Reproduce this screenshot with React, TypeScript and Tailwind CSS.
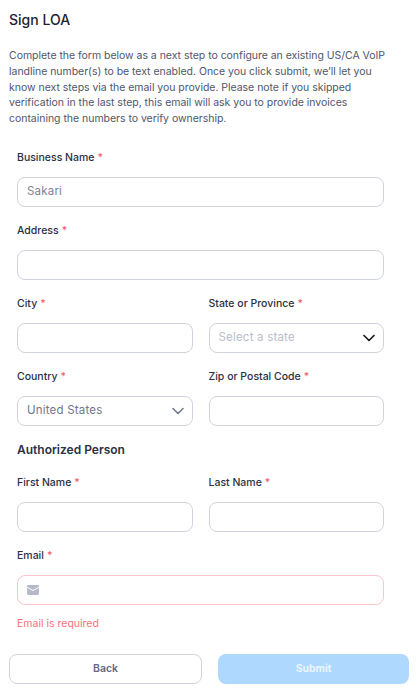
import { ChevronDown } from "lucide-react";
import type { ReactNode } from "react";

function Label({ text, required = true }: { text: string; required?: boolean }) {
  return (
    <label className="block h-[14px] text-[10.5px] leading-[16px] font-medium text-[#2a2f45]">
      {text}
      {required ? <span className="ml-[3px] text-[#f0616d]">*</span> : null}
    </label>
  );
}

function Box({ children, error }: { children?: ReactNode; error?: boolean }) {
  return (
    <div
      className={`mt-[13px] flex h-[30px] items-center rounded-[8px] border bg-white px-[9px] text-[11.5px] tracking-[0.2px] ${
        error ? "border-[#fcc5c9]" : "border-[#cfd3e0]"
      }`}
    >
      {children}
    </div>
  );
}

function Field({ label, children }: { label: string; children?: ReactNode }) {
  return (
    <div className="min-w-0 flex-1">
      <Label text={label} />
      <Box>{children}</Box>
    </div>
  );
}

export default function App() {
  return (
    <div className="h-[695px] w-[419px] overflow-hidden bg-white px-[9px] font-['Inter',sans-serif]">
      <h1 className="pt-[11px] text-[14px] leading-[18px] font-medium text-[#1d2233]">Sign LOA</h1>
      <p className="mt-[19px] w-[385px] text-[10.5px] leading-[15.75px] tracking-[-0.03px] text-[#4f566b]">
        Complete the form below as a next step to configure an existing US/CA VoIP landline number(s) to be text
        enabled. Once you click submit, we’ll let you know next steps via the email you provide. Please note if you
        skipped verification in the last step, this email will ask you to provide invoices containing the numbers to
        verify ownership.
      </p>

      <div className="mt-[23.25px] ml-[8px] w-[367px]">
        <Field label="Business Name">
          <span className="text-[#7d8398]">Sakari</span>
        </Field>
        <div className="mt-[16px]">
          <Field label="Address" />
        </div>
        <div className="mt-[16px] flex gap-[16px]">
          <Field label="City" />
          <Field label="State or Province">
            <span className="flex-1 text-[#b9bdcb]">Select a state</span>
            <ChevronDown className="mr-[-5px] h-[20px] w-[20px] text-[#14171f]" strokeWidth={2} />
          </Field>
        </div>
        <div className="mt-[16px] flex gap-[16px]">
          <Field label="Country">
            <span className="flex-1 text-[#6f758b]">United States</span>
            <ChevronDown className="mr-[-5px] h-[20px] w-[20px] text-[#6f758b]" strokeWidth={1.8} />
          </Field>
          <Field label="Zip or Postal Code" />
        </div>
        <h2 className="mt-[16px] text-[12px] leading-[16px] font-semibold text-[#2a2f45]">Authorized Person</h2>
        <div className="mt-[17px] flex gap-[16px]">
          <Field label="First Name" />
          <Field label="Last Name" />
        </div>
        <div className="mt-[16px]">
          <Label text="Email" />
          <Box error>
            <svg viewBox="0 0 12 10" className="h-[10px] w-[12px]" fill="#b5b9c8">
              <path d="M0 1.2C0 .5.5 0 1.2 0h9.6c.7 0 1.2.5 1.2 1.2v.5L6 5 0 1.7z" />
              <path d="M0 2.8 6 6l6-3.200v6C12 9.500 11.500 10 10.800 10H1.200C.5 10 0 9.500 0 8.800z" />
            </svg>
          </Box>
        </div>
        <p className="mt-[12px] text-[10.5px] leading-[14px] text-[#f9727c]">Email is required</p>
      </div>

      <div className="mt-[23px] flex gap-[16px]">
        <button
          type="button"
          className="h-[30px] w-[193px] rounded-[8px] border border-[#cfd3e0] bg-white text-[10.5px] font-semibold text-[#636a80]"
        >
          Back
        </button>
        <button
          type="button"
          className="h-[30px] w-[191px] rounded-[8px] bg-[#aed8fd] text-[10.5px] font-semibold text-white/80"
        >
          Submit
        </button>
      </div>
    </div>
  );
}
